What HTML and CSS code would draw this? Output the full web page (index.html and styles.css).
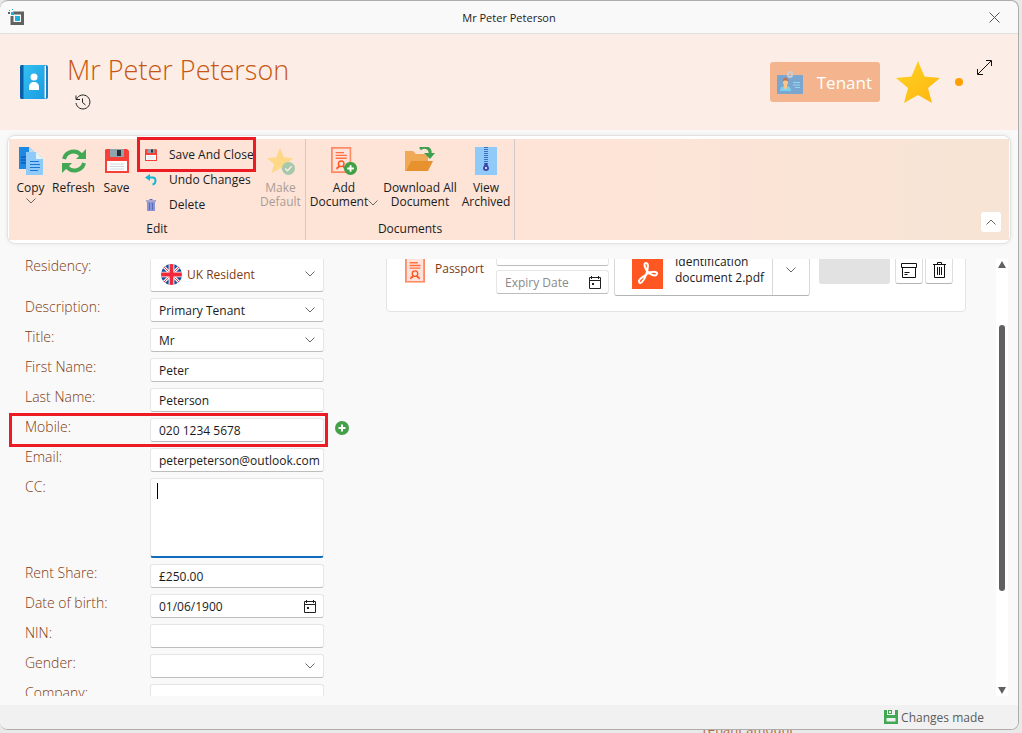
FILE: index.html
```html
<!DOCTYPE html>
<html lang="en">
<head>
    <meta charset="UTF-8">
    <meta name="viewport" content="width=device-width, initial-scale=1.0">
    <title>Mr Peter Peterson</title>
    <link rel="stylesheet" href="styles.css">
</head>
<body>

<!-- Shared icons -->
<svg class="sprite" aria-hidden="true">
    <symbol id="chevron" viewBox="0 0 10 6"><path d="M.5.5 5 5 9.500.5" fill="none" stroke="#666"/></symbol>
    <symbol id="calendar" viewBox="0 0 12 13">
        <path d="M.5 1.500h11v11H.5zM.5 4.500h11M2.500 0v3M9.500 0v3" fill="none" stroke="#222"/>
        <path d="M3 7h2v2H3z" fill="#222"/>
    </symbol>
    <symbol id="floppy" viewBox="0 0 24 24">
        <path d="M1 0h21l2 2v22H0V1z" fill="#f8403a"/>
        <path d="M5 0h14v8H5z" fill="#90a4ae"/>
        <path d="M12 1h4v6h-4z" fill="#263238"/>
        <path d="M2 12h20v10H2z" fill="#fff"/>
        <path d="M5 15h14M5 17.500h14M5 20h14" stroke="#cfd8dc"/>
    </symbol>
    <symbol id="certificate" viewBox="0 0 22 28">
        <path d="M1 1h20v26H1z" fill="#ffe3da" stroke="#ff8a65" stroke-width="2"/>
        <path d="M5 6h9M5 9h12M5 12h12" stroke="#ff7043" stroke-width="1.500"/>
        <circle cx="11" cy="18" r="3" fill="none" stroke="#ff5722" stroke-width="1.500"/>
        <path d="M9 20l-3 4M13 20l3 4M6 22h3M13 22h3" stroke="#ff5722" stroke-width="1.500"/>
    </symbol>
    <symbol id="plus" viewBox="0 0 14 14">
        <circle cx="7" cy="7" r="7" fill="#43a047"/>
        <path d="M7 3.500v7M3.500 7h7" stroke="#fff" stroke-width="2"/>
    </symbol>
    <symbol id="star" viewBox="0 0 44 42">
        <path d="M22 0l6.500 15.500L44 17 32 27l4 15-14-8-14 8 4-15L0 17l15.500-1.500z"/>
    </symbol>
</svg>

<div class="window">
    <header class="titlebar">
        <svg class="app-icon" viewBox="0 0 16 16">
            <path d="M5 4h9.500v10.500H4V7" fill="none" stroke="#616161" stroke-width="3"/>
            <path d="M7 7h5v5H7zM3 3h3v3H3zM1 1h1v1H1zM4 0h1v1H4z" fill="#1cb0e0"/>
            <path d="M0 3h2v2H0z" fill="#616161"/>
        </svg>
        <span class="titlebar-text">Mr Peter Peterson</span>
        <button class="plain close" aria-label="Close">
            <svg width="11" height="11" viewBox="0 0 11 11"><path d="M.5.5l10 10M10.500.5l-10 10" stroke="#555" fill="none"/></svg>
        </button>
    </header>

    <section class="hero">
        <svg class="contact-icon" viewBox="0 0 28 34">
            <defs><linearGradient id="book" x2="1" y2="1"><stop stop-color="#35c1f1"/><stop offset="1" stop-color="#199be2"/></linearGradient></defs>
            <rect width="28" height="34" rx="2" fill="#1480c8"/>
            <path d="M3 0h21v34H3z" fill="url(#book)"/>
            <path d="M2 0h1.500v34H2a2 2 0 0 1-2-2V2a2 2 0 0 1 2-2z" fill="#0a5fa8"/>
            <path d="M24.500.5h1.500v33h-1.500z" fill="#fff"/>
            <circle cx="14" cy="12" r="3.500" fill="#fff"/>
            <path d="M9 25v-3c0-3 2-5 5-5s5 2 5 5v3z" fill="#fff"/>
        </svg>
        <div class="person">
            <h1>Mr Peter Peterson</h1>
            <button class="plain history" aria-label="History">
                <svg width="16" height="16" viewBox="0 0 16 16" fill="none" stroke="#222">
                    <path d="M1.500 5.200A7 7 0 1 1 1 9M1 1.500v4h4M7.500 4.500v4L10.500 11"/>
                </svg>
            </button>
        </div>
        <div class="badge">
            <svg width="26" height="23" viewBox="0 0 26 23">
                <rect y="4" width="26" height="19" rx="1" fill="#7ba6d0"/>
                <rect x="11" y="1" width="4" height="5" rx="2" fill="none" stroke="#c8cdd2" stroke-width="2"/>
                <path d="M3 20c0-4 2-5 5.500-5s5.500 1 5.500 5z" fill="#7fd0ec"/>
                <path d="M7 13h3v4l-1.500 2L7 17z" fill="#fbc58a"/>
                <ellipse cx="8.500" cy="11" rx="2.500" ry="3.500" fill="#fbc58a"/>
                <path d="M5.500 11c0-6 6-6 6 0-1-2-5-2-6 0z" fill="#b9785a"/>
                <path d="M16 11.500h7M16 14h7M18 16.500h5" stroke="#8fd8f2"/>
            </svg>
            <span>Tenant</span>
        </div>
        <svg class="big-star" viewBox="0 0 44 42">
            <defs><linearGradient id="gold" x2="1" y2="1"><stop stop-color="#fed428"/><stop offset="1" stop-color="#ffb40c"/></linearGradient></defs>
            <use href="#star" fill="url(#gold)"/>
        </svg>
        <span class="dot"></span>
        <button class="plain expand" aria-label="Expand">
            <svg width="15" height="15" viewBox="0 0 15 15" fill="none" stroke="#111"><path d="M1 14 14 1M9 .5h5.500V6M.5 9v5.500H6"/></svg>
        </button>
    </section>

    <nav class="ribbon">
        <div class="ribbon-inner">
            <div class="group">
                <div class="tools">
                    <button class="tool">
                        <svg width="26" height="28" viewBox="0 0 26 28">
                            <path d="M1 0h10l6 6v16H1z" fill="#1e88e5"/>
                            <path d="M11 0v6h6z" fill="#bbdefb"/>
                            <path d="M3 10h5M3 13h5M3 16h5" stroke="#0d47a1"/>
                            <path d="M8 5h10l7 7v16H8z" fill="#90caf9"/>
                            <path d="M18 5v7h7z" fill="#e1f5fe"/>
                            <path d="M12 14.500h9M12 17.500h10M12 20.500h10M12 23.500h8" stroke="#1976d2"/>
                        </svg>
                        <span>Copy</span>
                        <svg width="10" height="6"><use href="#chevron"/></svg>
                    </button>
                    <button class="tool">
                        <svg width="26" height="28" viewBox="0 0 26 28">
                            <path d="M3 12C5 4 15 2 20 8M23 16C21 24 11 26 6 20" fill="none" stroke="#43a853" stroke-width="4"/>
                            <path d="M25 2v10H15zM1 26V16h10z" fill="#43a853"/>
                        </svg>
                        <span>Refresh</span>
                    </button>
                    <button class="tool">
                        <svg width="24" height="28" viewBox="0 0 24 28"><use href="#floppy" y="2" width="24" height="24"/></svg>
                        <span>Save</span>
                    </button>
                    <div class="small-tools">
                        <button class="small-tool boxed"><svg width="12" height="12"><use href="#floppy"/></svg>Save And Close</button>
                        <button class="small-tool">
                            <svg width="12" height="12" viewBox="0 0 12 12"><path d="M2 3.500h5.500c4 0 4 6.500 0 7" fill="none" stroke="#16b5d4" stroke-width="2"/><path d="M5 0v7L0 3.500z" fill="#16b5d4"/></svg>Undo Changes
                        </button>
                        <button class="small-tool">
                            <svg width="12" height="12" viewBox="0 0 12 12"><path d="M2 3h8v9H2z" fill="#8a93d4"/><path d="M1 2h10M4.500.5h3M4.500 4v7M7.500 4v7" stroke="#5c6bc0"/></svg>Delete
                        </button>
                    </div>
                    <button class="tool faded" disabled>
                        <svg width="30" height="30" viewBox="0 0 30 30">
                            <use href="#star" width="28" height="27" y="1" fill="#ffca28"/>
                            <circle cx="23" cy="23" r="7" fill="#43a878"/>
                            <path d="M19.500 23l2.500 2.500 4.500-5" stroke="#fff" stroke-width="1.500" fill="none"/>
                        </svg>
                        <span>Make<br>Default</span>
                    </button>
                </div>
                <span class="group-name">Edit</span>
            </div>
            <div class="group">
                <div class="tools">
                    <button class="tool wide">
                        <svg width="28" height="30" viewBox="0 0 28 30">
                            <use href="#certificate" width="22" height="28"/>
                            <use href="#plus" x="14" y="16" width="14" height="14"/>
                        </svg>
                        <span>Add<br>Document<svg class="inline-chevron" width="10" height="6"><use href="#chevron"/></svg></span>
                    </button>
                    <button class="tool wide">
                        <svg width="30" height="28" viewBox="0 0 30 28">
                            <path d="M0 4h8l3 3h12v17H0z" fill="#f0a957"/>
                            <path d="M6 14h22l-5 10H1z" fill="#e8922f"/>
                            <path d="M15 2c6-4 11 0 10 5" fill="none" stroke="#3f9f4f" stroke-width="3"/>
                            <path d="M19 6h11l-5 6z" fill="#3f9f4f"/>
                        </svg>
                        <span>Download All<br>Document</span>
                    </button>
                    <button class="tool">
                        <svg width="22" height="28" viewBox="0 0 22 28">
                            <path d="M0 0h22v28H0z" fill="#90caf9"/>
                            <path d="M11 0v18" stroke="#3f6fc4" stroke-width="4" stroke-dasharray="1 1"/>
                            <path d="M10 16h2l2 5a3 3 0 1 1-6 0z" fill="#3949ab"/>
                            <circle cx="11" cy="21" r="1" fill="#fff"/>
                        </svg>
                        <span>View<br>Archived</span>
                    </button>
                </div>
                <span class="group-name">Documents</span>
            </div>
            <button class="plain collapse" aria-label="Collapse ribbon">
                <svg class="flip" width="10" height="6"><use href="#chevron"/></svg>
            </button>
        </div>
    </nav>

    <main class="content">
        <div class="viewport">
            <form class="details">
                <div class="row tall">
                    <label for="residency">Residency:</label>
                    <div class="field flagged">
                        <svg class="flag" width="21" height="21" viewBox="0 0 22 22">
                            <clipPath id="round"><circle cx="11" cy="11" r="11"/></clipPath>
                            <g clip-path="url(#round)">
                                <path d="M0 0h22v22H0z" fill="#1c4f96"/>
                                <path d="M0 0l22 22M22 0 0 22" stroke="#fff" stroke-width="3"/>
                                <path d="M0 0l22 22M22 0 0 22" stroke="#f0283c"/>
                                <path d="M11 0v22M0 11h22" stroke="#fff" stroke-width="6"/>
                                <path d="M11 0v22M0 11h22" stroke="#f0283c" stroke-width="4"/>
                            </g>
                        </svg>
                        <select id="residency"><option>UK Resident</option></select>
                        <svg class="arrow" width="10" height="6"><use href="#chevron"/></svg>
                    </div>
                </div>
                <div class="row">
                    <label for="description">Description:</label>
                    <div class="field">
                        <select id="description"><option>Primary Tenant</option></select>
                        <svg class="arrow" width="10" height="6"><use href="#chevron"/></svg>
                    </div>
                </div>
                <div class="row">
                    <label for="title">Title:</label>
                    <div class="field">
                        <select id="title"><option>Mr</option></select>
                        <svg class="arrow" width="10" height="6"><use href="#chevron"/></svg>
                    </div>
                </div>
                <div class="row">
                    <label for="firstName">First Name:</label>
                    <div class="field"><input type="text" id="firstName" value="Peter"></div>
                </div>
                <div class="row">
                    <label for="lastName">Last Name:</label>
                    <div class="field"><input type="text" id="lastName" value="Peterson"></div>
                </div>
                <div class="row boxed">
                    <label for="mobile">Mobile:</label>
                    <div class="field"><input type="text" id="mobile" value="020 1234 5678"></div>
                    <button type="button" class="plain add" aria-label="Add number"><svg width="14" height="14"><use href="#plus"/></svg></button>
                </div>
                <div class="row">
                    <label for="email">Email:</label>
                    <div class="field"><input type="text" id="email" value="peterpeterson@outlook.com"></div>
                </div>
                <div class="row">
                    <label for="cc">CC:</label>
                    <div class="field active"><textarea id="cc"></textarea></div>
                </div>
                <div class="row">
                    <label for="rent">Rent Share:</label>
                    <div class="field"><input type="text" id="rent" value="£250.00"></div>
                </div>
                <div class="row">
                    <label for="birth">Date of birth:</label>
                    <div class="field">
                        <input type="text" id="birth" value="01/06/1900">
                        <button type="button" class="plain pick" aria-label="Pick date"><svg width="12" height="13"><use href="#calendar"/></svg></button>
                    </div>
                </div>
                <div class="row">
                    <label for="nin">NIN:</label>
                    <div class="field"><input type="text" id="nin"></div>
                </div>
                <div class="row">
                    <label for="gender">Gender:</label>
                    <div class="field">
                        <select id="gender"><option></option></select>
                        <svg class="arrow" width="10" height="6"><use href="#chevron"/></svg>
                    </div>
                </div>
                <div class="row">
                    <label for="company">Company:</label>
                    <div class="field"><input type="text" id="company"></div>
                </div>
            </form>

            <section class="documents">
                <svg width="20" height="28" viewBox="0 0 22 28"><use href="#certificate"/></svg>
                <span class="doc-name">Passport</span>
                <div class="dates">
                    <div class="field"><input type="text" aria-label="Issue date"></div>
                    <div class="field">
                        <input type="text" placeholder="Expiry Date" aria-label="Expiry date">
                        <button type="button" class="plain pick" aria-label="Pick date"><svg width="12" height="13"><use href="#calendar"/></svg></button>
                    </div>
                </div>
                <div class="file">
                    <button class="plain file-name">
                        <svg width="31" height="38" viewBox="0 0 31 38">
                            <path d="M0 0h31v38H0z" fill="#ff5722"/>
                            <path d="M14 12c-3 0-1 6 2 9s8 5 9 2-6-3-10 0-9 5-8 8 5-1 7-7 3-12 0-12z" fill="none" stroke="#fff" stroke-width="2"/>
                        </svg>
                        <span>Identification<br>document 2.pdf</span>
                    </button>
                    <button class="plain file-more" aria-label="More"><svg width="10" height="6"><use href="#chevron"/></svg></button>
                </div>
                <button class="plain blank" aria-label="Open" disabled></button>
                <button class="icon-button" aria-label="Archive">
                    <svg width="16" height="15" viewBox="0 0 16 15" fill="none" stroke="#111"><path d="M.5.5h15v4H.5zM1.500 4.500v10h13v-10M3.500 9.500h5M3.500 11.500h3"/></svg>
                </button>
                <button class="icon-button" aria-label="Delete">
                    <svg width="13" height="16" viewBox="0 0 13 16" fill="none" stroke="#111"><path d="M0 2.500h13M4.500 2.500v-2h4v2M1.500 2.500v13h10v-13M4.500 5v8M6.500 5v8M8.500 5v8"/></svg>
                </button>
            </section>
        </div>
        <div class="scrollbar">
            <svg width="8" height="7"><path d="M4 0l4 7H0z"/></svg>
            <div class="track"><div class="thumb"></div></div>
            <svg width="8" height="7"><path d="M0 0h8L4 7z"/></svg>
        </div>
    </main>

    <footer class="statusbar">
        <svg width="14" height="14" viewBox="0 0 14 14">
            <path d="M0 0h14v14H0z" fill="#43a853"/>
            <path d="M3 0h8v5H3zM2.500 8h9v3.500h-9z" fill="#f1f1f1"/>
            <path d="M4 0h4v4H4z" fill="#43a853"/><path d="M5 1h2v2H5z" fill="#f1f1f1"/>
        </svg>
        <span>Changes made</span>
    </footer>
</div>

<!-- Edge of the page behind the window -->
<div class="behind"><span>Tenant amount</span></div>

</body>
</html>
```

FILE: styles.css
```css
* {
    box-sizing: border-box;
}
body {
    font-family: "Open Sans", "Noto Sans", sans-serif;
    font-size: 12px;
    color: #1b1b1b;
    margin: 0;
    padding-right: 3px;
    height: 100vh;
    display: flex;
    flex-direction: column;
    overflow: hidden;
    background-color: #e9e9e9;
}
button, input, select, textarea {
    font: inherit;
    color: inherit;
    margin: 0;
}
svg {
    display: block;
    flex: none;
}
.sprite {
    position: absolute;
    width: 0;
    height: 0;
}
.plain {
    padding: 0;
    border: none;
    background: none;
    display: flex;
    align-items: center;
    justify-content: center;
}
.window {
    flex: 1;
    min-height: 0;
    display: flex;
    flex-direction: column;
    background-color: #f9f9f9;
    border: 1px solid #adadad;
    border-left: none;
    border-radius: 8px;
    overflow: hidden;
}

/* Title bar */
.titlebar {
    display: grid;
    grid-template-columns: 48px 1fr 48px;
    align-items: center;
    height: 33px;
    flex: none;
    border-bottom: 1px solid #e2dedc;
}
.app-icon {
    width: 16px;
    height: 16px;
    margin-left: 8px;
}
.titlebar-text {
    text-align: center;
    font-size: 11px;
}
.close {
    height: 32px;
}

/* Header with the person's name */
.hero {
    display: flex;
    align-items: center;
    height: 96px;
    flex: none;
    padding: 0 26px 0 20px;
    background-color: #fceee7;
}
.contact-icon {
    width: 28px;
    height: 34px;
}
.person {
    flex: 1;
    margin: 0 0 4px 19px;
}
h1 {
    margin: 0;
    font-size: 27px;
    line-height: 40px;
    font-weight: 300;
    color: #c8560f;
}
.history {
    margin: 4px 0 0 8px;
}
.badge {
    display: flex;
    align-items: center;
    gap: 14px;
    height: 40px;
    padding: 0 8px 0 7px;
    border-radius: 3px;
    background-color: #f4b58e;
    color: #fff;
    font-size: 17px;
}
.big-star {
    width: 44px;
    height: 42px;
    margin-left: 16px;
}
.dot {
    width: 8px;
    height: 8px;
    margin-left: 15px;
    border-radius: 50%;
    background-color: #ffa000;
}
.expand {
    margin: 0 0 30px 14px;
}

/* Ribbon */
.ribbon {
    flex: none;
    margin: 5px 7px 15px;
    padding: 3px 1px;
    border: 1px solid #e2e2e2;
    border-radius: 8px;
    background-color: #fff;
    box-shadow: 0 0 4px rgba(0, 0, 0, 0.08);
}
.ribbon-inner {
    display: flex;
    height: 101px;
    background: linear-gradient(to right, #fde4d7 60%, #f7e4d5);
}
.group {
    display: flex;
    flex-direction: column;
    justify-content: space-between;
    padding: 8px 0 3px;
    border-right: 1px solid #cfcac7;
}
.tools {
    display: flex;
    align-items: flex-start;
}
.tool {
    width: 43px;
    padding: 0;
    border: none;
    background: none;
    display: flex;
    flex-direction: column;
    align-items: center;
    line-height: 14px;
    white-space: nowrap;
}
.tool > svg:first-child {
    height: 28px;
    margin-bottom: 6px;
}
.tool:last-child {
    width: 49px;
}
.tool.wide {
    width: 76px;
}
.tool.wide + .tool:last-child {
    width: 56px;
}
.tool span + svg {
    margin-top: 3px;
}
.inline-chevron {
    display: inline;
    vertical-align: middle;
}
.faded {
    opacity: 0.45;
    color: #444;
}
.small-tools {
    width: 118px;
    margin-top: -5px;
}
.small-tool {
    position: relative;
    width: 100%;
    height: 25px;
    padding: 0 0 0 7px;
    border: none;
    background: none;
    display: flex;
    align-items: center;
    gap: 12px;
    white-space: nowrap;
}
/* Red frame round a highlighted item */
.boxed::after {
    content: "";
    position: absolute;
    border: 3px solid #ed1c24;
    pointer-events: none;
}
.small-tool.boxed::after {
    inset: -5px 0 -5px -1px;
}
.group-name {
    text-align: center;
    line-height: 16px;
}
.collapse {
    width: 20px;
    height: 20px;
    margin: auto 8px 8px auto;
    border-radius: 3px;
    background-color: #fff;
}
.flip {
    transform: rotate(180deg);
}

/* Scrolled area */
.content {
    flex: 1;
    min-height: 0;
    display: flex;
    padding: 0 10px 9px 0;
}
.viewport {
    flex: 1;
    display: flex;
    align-items: flex-start;
    padding-right: 30px;
    overflow: hidden;
}
.details {
    display: flex;
    flex-direction: column;
    gap: 6px;
    width: 386px;
    flex: none;
    margin-top: -7px;
    padding-left: 25px;
}
.row {
    position: relative;
    display: grid;
    grid-template-columns: 125px 174px auto;
    justify-content: start;
}
.row label {
    font-size: 14px;
    font-weight: 300;
    line-height: 18px;
    color: #7f3a10;
}
.row.tall label {
    line-height: 28px;
}
.row.boxed::after {
    inset: -5px 58px -5px -16px;
}
.add {
    align-self: start;
    margin: 3px 0 0 11px;
}
.field {
    position: relative;
    display: flex;
    align-items: center;
    height: 24px;
    border: 1px solid #e6e6e6;
    border-bottom-color: #bdbdbd;
    border-radius: 3px;
    background-color: #fff;
}
.field input, .field select, .field textarea {
    flex: 1;
    min-width: 0;
    width: 100%;
    height: 100%;
    padding: 0 0 0 8px;
    border: none;
    outline: none;
    background: none;
    appearance: none;
    resize: none;
}
.arrow {
    position: absolute;
    right: 8px;
    pointer-events: none;
}
.pick {
    margin-right: 7px;
}
.flagged {
    height: 40px;
    padding-top: 4px;
    color: #7f3a10;
}
.flag {
    margin-left: 10px;
}
.flagged select {
    padding-left: 5px;
}
.field.active {
    height: 80px;
    border-bottom: 2px solid #0f6cbd;
}
/* Text cursor */
.field.active::before {
    content: "";
    position: absolute;
    left: 6px;
    top: 4px;
    width: 1px;
    height: 16px;
    background-color: #000;
}

/* Documents panel */
.documents {
    flex: 1;
    display: flex;
    align-items: center;
    margin-top: -34px;
    padding: 16px 12px 13px 18px;
    border: 1px solid #e4e4e4;
    border-radius: 4px;
    background-color: #fff;
}
.doc-name {
    width: 61px;
    margin: 0 0 4px 10px;
    color: #7f3a10;
}
.dates {
    display: flex;
    flex-direction: column;
    gap: 4px;
    width: 113px;
    margin-bottom: 4px;
}
.dates input::placeholder {
    color: #8a8a8a;
}
.file {
    display: flex;
    flex: 1;
    height: 51px;
    margin: 0 9px 0 5px;
    border: 1px solid #d8d8d8;
    border-bottom-color: #b4b4b4;
    border-radius: 3px;
}
.file-name {
    flex: 1;
    justify-content: flex-start;
    gap: 12px;
    padding-left: 17px;
    text-align: left;
    line-height: 16px;
    white-space: nowrap;
}
.file-more {
    width: 37px;
    border-left: 1px solid #d8d8d8;
}
.blank {
    width: 71px;
    height: 28px;
    margin-right: 5px;
    border-radius: 3px;
    background-color: #e2e2e2;
}
.icon-button {
    display: flex;
    align-items: center;
    justify-content: center;
    width: 28px;
    height: 28px;
    padding: 0;
    border: 1px solid #dedede;
    border-bottom-color: #b4b4b4;
    border-radius: 3px;
    background-color: #fff;
}
.icon-button + .icon-button {
    margin-left: 2px;
}

/* Scroll bar */
.scrollbar {
    display: flex;
    flex-direction: column;
    align-items: center;
    width: 12px;
    padding: 2px 0;
    background-color: #fff;
    fill: #606060;
}
.track {
    flex: 1;
    width: 6px;
    padding: 57px 0 96px;
}
.thumb {
    height: 100%;
    border-radius: 3px;
    background-color: #606060;
}

/* Status bar */
.statusbar {
    display: flex;
    align-items: center;
    justify-content: flex-end;
    gap: 3px;
    height: 24px;
    flex: none;
    padding-right: 34px;
    background-color: #f1f1f1;
    color: #5c5c5c;
}
.behind {
    display: flex;
    justify-content: flex-end;
    align-items: flex-end;
    height: 3px;
    padding-right: 225px;
    overflow: hidden;
    color: #b5683a;
    font-size: 13px;
    line-height: 8px;
}
```
